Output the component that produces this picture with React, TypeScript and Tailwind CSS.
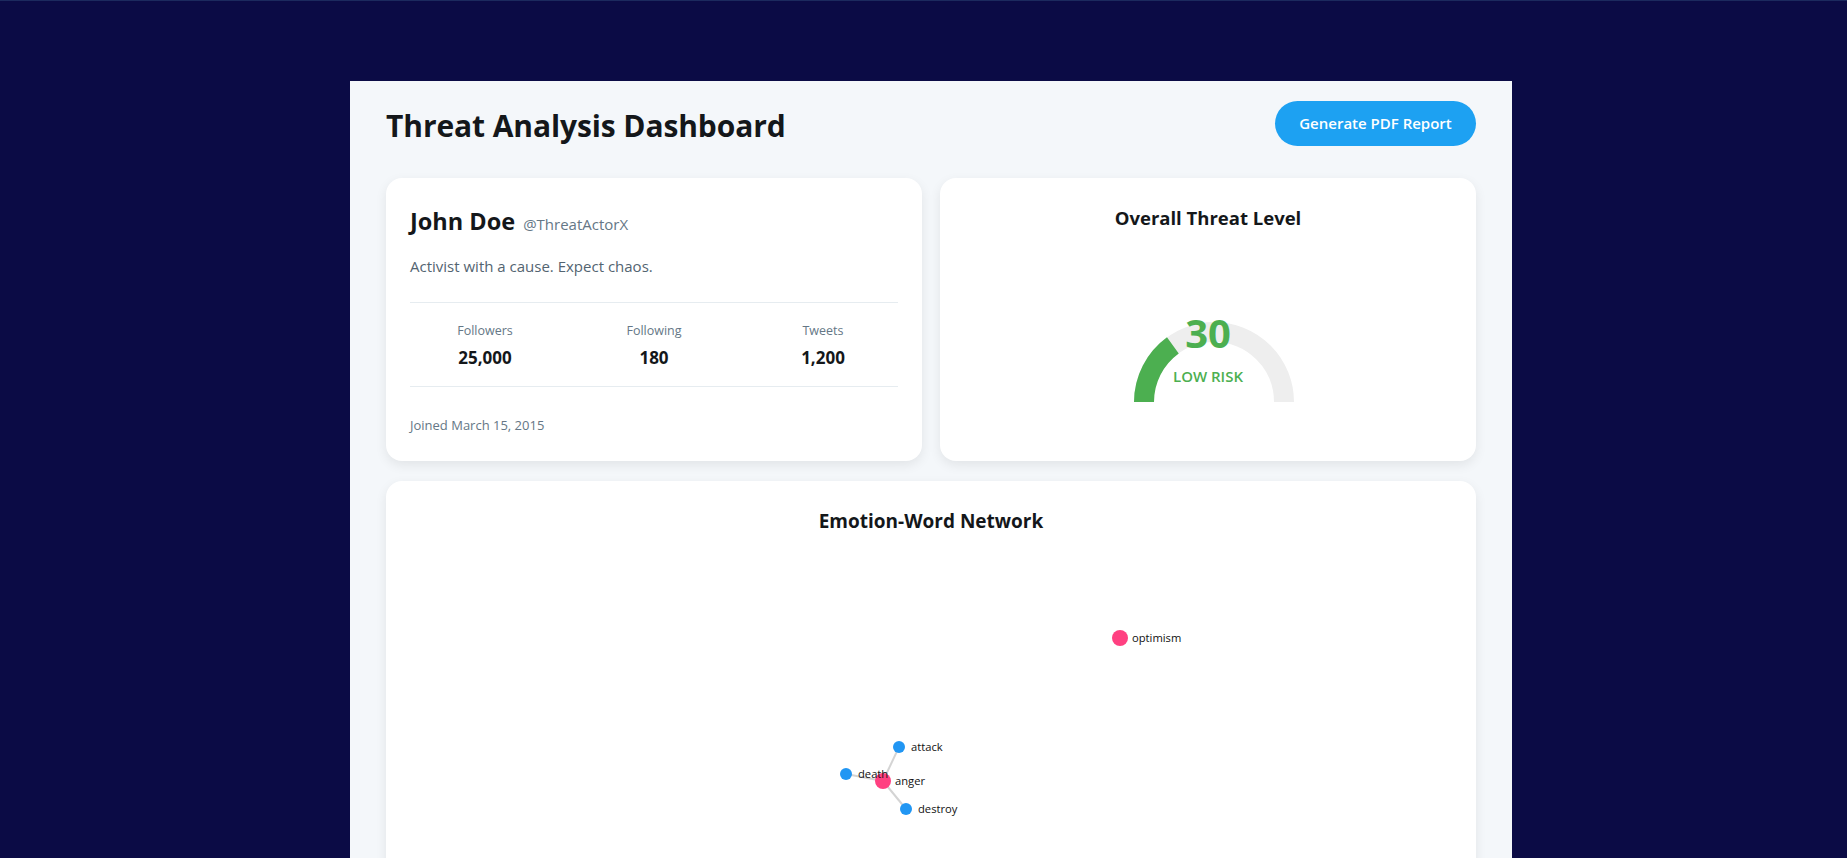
import React from "react";

const stats = [
  { label: "Followers", value: "25,000" },
  { label: "Following", value: "180" },
  { label: "Tweets", value: "1,200" },
];

type Node = { id: string; x: number; y: number; kind: "emotion" | "word" };

const nodes: Node[] = [
  { id: "optimism", x: 710, y: 88, kind: "emotion" },
  { id: "anger", x: 473, y: 231, kind: "emotion" },
  { id: "attack", x: 489, y: 197, kind: "word" },
  { id: "death", x: 436, y: 224, kind: "word" },
  { id: "destroy", x: 496, y: 259, kind: "word" },
];

const links = [
  ["anger", "attack"],
  ["anger", "death"],
  ["anger", "destroy"],
];

function polar(cx: number, cy: number, r: number, deg: number) {
  const a = (deg * Math.PI) / 180;
  return [cx + r * Math.cos(a), cy - r * Math.sin(a)];
}

function arcPath(cx: number, cy: number, r: number, from: number, to: number) {
  const [x1, y1] = polar(cx, cy, r, from);
  const [x2, y2] = polar(cx, cy, r, to);
  return `M ${x1} ${y1} A ${r} ${r} 0 0 1 ${x2} ${y2}`;
}

function Gauge({ value }: { value: number }) {
  const cx = 96;
  const cy = 90;
  const r = 70;
  const end = 180 - (value / 100) * 180;
  return (
    <div className="relative w-[180px] h-[100px]">
      <svg width="180" height="100" viewBox="0 0 180 100">
        <path d={arcPath(cx, cy, r, 180, 0)} fill="none" stroke="#eeeeee" strokeWidth="20" />
        <path d={arcPath(cx, cy, r, 180, end)} fill="none" stroke="#4caf50" strokeWidth="20" />
      </svg>
      <div className="absolute inset-x-0 top-[1px] text-center text-[40px] leading-[40px] font-bold text-[#4caf50]">
        {value}
      </div>
      <div className="absolute inset-x-0 top-[54px] text-center text-[15px] leading-[20px] font-semibold text-[#4caf50]">
        LOW RISK
      </div>
    </div>
  );
}

function Network() {
  const byId = Object.fromEntries(nodes.map((n) => [n.id, n]));
  return (
    <svg width="1042" height="500" className="block mt-[15px]">
      {links.map(([a, b]) => (
        <line
          key={a + b}
          x1={byId[a].x}
          y1={byId[a].y}
          x2={byId[b].x}
          y2={byId[b].y}
          stroke="#d4d4d4"
          strokeWidth="2"
        />
      ))}
      {nodes.map((n) => (
        <circle
          key={n.id}
          cx={n.x}
          cy={n.y}
          r={n.kind === "emotion" ? 8 : 6}
          fill={n.kind === "emotion" ? "#ff4081" : "#2196f3"}
        />
      ))}
      {nodes.map((n) => (
        <text key={n.id} x={n.x + 12} y={n.y + 4} fontSize="11.2" fill="#111111">
          {n.id}
        </text>
      ))}
    </svg>
  );
}

export default function App() {
  return (
    <div className="min-h-screen bg-[#0b0b45] border-t border-[#1c2a5e] pl-[15px] pt-[80px] font-['Open_Sans',sans-serif]">
      <div className="w-[1162px] mx-auto bg-[#f4f7fa] px-[36px] pt-[20px] pb-[36px]">
        {/* Header */}
        <div className="h-[45px] flex items-center justify-between mb-[32px]">
          <h1 className="pt-[4px] text-[30px] leading-[41px] font-bold text-[#14171a] tracking-[-0.1px]">Threat Analysis Dashboard</h1>
          <button className="h-[45px] w-[201px] rounded-full bg-[#1da1f2] text-white text-[15px] font-semibold">
            Generate PDF Report
          </button>
        </div>

        <div className="grid grid-cols-2 gap-[18px] mb-[20px]">
          {/* Profile */}
          <div className="bg-white rounded-2xl shadow-[0_4px_12px_rgba(0,0,0,0.08)] px-[24px] pt-[24px] pb-[27px]">
            <div className="flex items-baseline gap-[8px]">
              <span className="text-[23.5px] leading-[38px] font-bold text-[#14171a]">John Doe</span>
              <span className="text-[15px] text-[#657786]">@ThreatActorX</span>
            </div>
            <p className="mt-[16px] text-[15px] leading-[20px] text-[#536471]">Activist with a cause. Expect chaos.</p>
            <div className="mt-[26px] border-y border-[#e6ecf0] pt-[19px] pb-[16px] flex justify-between">
              {stats.map((s) => (
                <div key={s.label} className="w-[150px] text-center">
                  <div className="text-[12.5px] leading-[18px] text-[#657786]">{s.label}</div>
                  <div className="mt-[6px] text-[17px] leading-[24px] font-bold text-[#14171a]">{s.value}</div>
                </div>
              ))}
            </div>
            <p className="mt-[29px] text-[13px] leading-[18px] text-[#657786]">Joined March 15, 2015</p>
          </div>

          {/* Threat level */}
          <div className="bg-white rounded-2xl shadow-[0_4px_12px_rgba(0,0,0,0.08)] p-[24px] flex flex-col items-center">
            <h2 className="text-[18.5px] leading-[32px] font-bold text-[#14171a]">Overall Threat Level</h2>
            <div className="mt-[78px]">
              <Gauge value={30} />
            </div>
          </div>
        </div>

        {/* Network */}
        <div className="bg-white rounded-2xl shadow-[0_4px_12px_rgba(0,0,0,0.08)] p-[24px]">
          <h2 className="pt-[2px] text-center text-[19px] leading-[28px] font-bold text-[#14171a]">Emotion-Word Network</h2>
          <Network />
        </div>
      </div>
    </div>
  );
}
